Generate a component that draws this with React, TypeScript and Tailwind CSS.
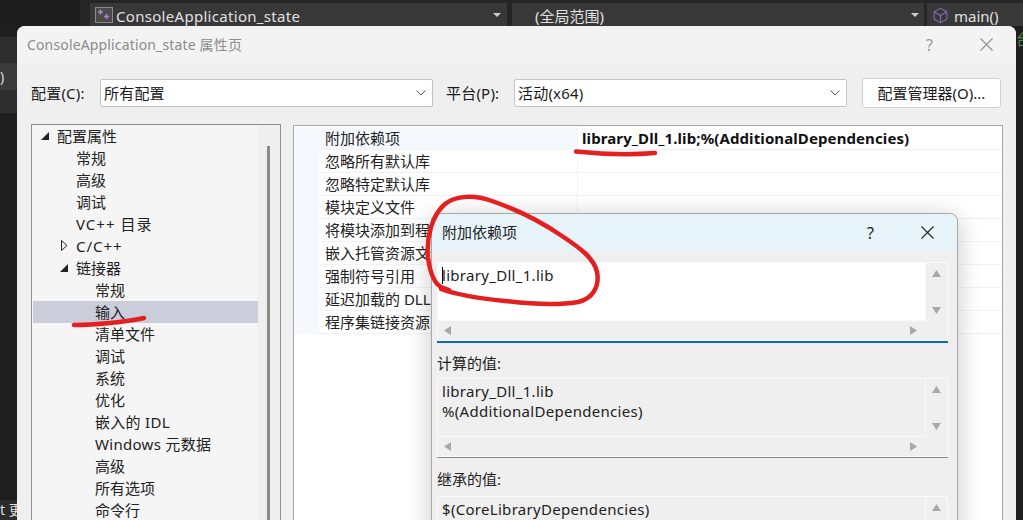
import { Box } from 'lucide-react';

const font = { fontFamily: '"Noto Sans", "Noto Sans CJK SC", sans-serif' };

const treeItems = [
  { label: '配置属性', level: 0, arrow: 'open' },
  { label: '常规', level: 1 },
  { label: '高级', level: 1 },
  { label: '调试', level: 1 },
  { label: 'VC++ 目录', level: 1, track: 'tracking-[1px]' },
  { label: 'C/C++', level: 1, arrow: 'closed', track: 'tracking-[1px]' },
  { label: '链接器', level: 1, arrow: 'open' },
  { label: '常规', level: 2 },
  { label: '输入', level: 2, selected: true },
  { label: '清单文件', level: 2 },
  { label: '调试', level: 2 },
  { label: '系统', level: 2 },
  { label: '优化', level: 2 },
  { label: '嵌入的 IDL', level: 2, track: 'tracking-[0.3px]' },
  { label: 'Windows 元数据', level: 2, track: 'tracking-[0.3px]' },
  { label: '高级', level: 2 },
  { label: '所有选项', level: 2 },
  { label: '命令行', level: 2 },
];

const gridRows = [
  '附加依赖项',
  '忽略所有默认库',
  '忽略特定默认库',
  '模块定义文件',
  '将模块添加到程序集',
  '嵌入托管资源文件',
  '强制符号引用',
  '延迟加载的 DLL',
  '程序集链接资源',
];

function Chevron() {
  return (
    <svg width="12" height="8" viewBox="0 0 12 8" fill="none" stroke="#555" strokeWidth="1">
      <path d="M1.5 1.5 L6 6 L10.5 1.5" />
    </svg>
  );
}

function Combo({ text }: { text: string }) {
  return (
    <div className="w-[333px] h-[28px] flex items-center justify-between pl-[3px] pr-[5px] bg-white border border-[#c4c4c4] rounded-[2px] text-[15px] tracking-[0.2px] text-[#1a1a1a]">
      <span>{text}</span>
      <Chevron />
    </div>
  );
}

function CloseIcon({ color, size = 13 }: { color: string; size?: number }) {
  return (
    <svg width={size} height={size} viewBox="0 0 13 13" fill="none" stroke={color} strokeWidth="1.1">
      <path d="M0.5 0.5 L12.5 12.5 M12.5 0.5 L0.5 12.5" />
    </svg>
  );
}

function ScrollArrow({ dir }: { dir: 'up' | 'down' | 'left' | 'right' }) {
  const points = {
    up: '0,7 4.5,0 9,7',
    down: '0,0 9,0 4.5,7',
    left: '7,0 7,9 0,4.5',
    right: '0,0 7,4.5 0,9',
  }[dir];
  return (
    <svg width="9" height="9" viewBox="0 0 9 9">
      <polygon points={points} fill="#a8a8a8" />
    </svg>
  );
}

function TextBox({ lines, white }: { lines: string[]; white?: boolean }) {
  return (
    <div className="h-[79px] flex flex-col border border-[#fafafa] bg-[#efefef]">
      <div className="flex flex-1 min-h-0">
        <div className={`flex-1 px-[4px] pt-[2px] border-r border-b border-[#fafafa] ${white ? 'bg-white' : ''}`}>
          {lines.map((line, i) => (
            <div key={i} className="h-[20px] leading-[20px] text-[15px] tracking-[0.3px] text-[#222]">
              {i === 0 && white && <span className="inline-block w-px h-[17px] bg-black align-[-3px] -mr-px" />}
              {line}
            </div>
          ))}
        </div>
        <div className="w-[21px] shrink-0 flex flex-col items-center justify-between pt-[7px] pb-[5px]">
          <ScrollArrow dir="up" />
          <ScrollArrow dir="down" />
        </div>
      </div>
      <div className="h-[19px] shrink-0 flex items-center justify-between pl-[6px] pr-[28px]">
        <ScrollArrow dir="left" />
        <ScrollArrow dir="right" />
      </div>
    </div>
  );
}

function IdeBackground() {
  return (
    <div className="h-full flex flex-col">
      <div className="flex h-[26px] shrink-0">
        <div className="w-[80px] bg-[#1c1c1c]" />
        <div className="w-[10px] bg-[#262626]" />
        <div className="flex-1 flex pt-[3px] bg-[#252525] text-[#e0e0e0] text-[15px]">
          <div className="w-[417px] bg-[#383838] flex items-center pl-[5px] pr-[6px]">
            <svg width="18" height="17" viewBox="0 0 18 17" className="mr-[3px] mt-[2px]">
              <rect x="0.5" y="0.5" width="17" height="15" fill="#4a4a4a" stroke="#8a8a8a" />
              <path d="M3 5h5M5.500 2.500v5M9 9.500h5M11.500 7v5" stroke="#b180d7" strokeWidth="1.5" />
            </svg>
            <span className="flex-1 pt-[3px] tracking-[0.3px]">ConsoleApplication_state</span>
            <span className="border-x-[4px] border-x-transparent border-t-[4px] border-t-[#ccc]" />
          </div>
          <div className="w-[412px] ml-[5px] bg-[#383838] flex items-center justify-between pl-[23px] pr-[5px]">
            <span className="pt-[3px]">(全局范围)</span>
            <span className="border-x-[4px] border-x-transparent border-t-[4px] border-t-[#ccc]" />
          </div>
          <div className="flex-1 ml-[3px] bg-[#383838] flex items-center pl-[5px] gap-[5px]">
            <Box size={17} color="#8a6bb5" strokeWidth={1.5} className="mt-[2px]" />
            <span className="pt-[3px]">main()</span>
          </div>
        </div>
      </div>
      <div className="flex-1 flex justify-between bg-[#1e1e1e]">
        <div className="w-[17px] flex flex-col text-[#ddd] text-[14px]">
          <div className="h-[11px]" />
          <div className="h-[26px] bg-[#2e2e2e]" />
          <div className="h-[27px] bg-[#3a3a3a] leading-[27px]">)</div>
          <div className="h-[23px] bg-[#2e2e2e]" />
          <div className="flex-1" />
          <div className="h-[20px] leading-[20px] bg-[#2c2c2c] whitespace-nowrap overflow-hidden">t 更</div>
        </div>
        <div className="w-[7px] pt-[2px] text-[#4e8a3e] text-[15px] overflow-hidden whitespace-nowrap">台</div>
      </div>
    </div>
  );
}

function InnerDialog() {
  return (
    <div className="absolute left-[431px] top-[213px] w-[527px] h-[330px] flex flex-col bg-[#efefef] border border-[#a8a8a8] rounded-t-[8px] shadow-[0_4px_24px_rgba(0,0,0,0.22)]">
      <div className="h-[37px] shrink-0 flex items-center bg-[#e6f3f8] rounded-t-[8px] pl-[10px] text-[15px] text-[#222]">
        <span className="flex-1">附加依赖项</span>
        <span className="w-[20px] pl-[4px] text-[16px] text-[#222]">?</span>
        <span className="ml-[38px] mr-[23px] flex"><CloseIcon color="#222" /></span>
      </div>
      <div className="flex-1 flex flex-col px-[5px] pt-[11px]">
        <div className="mr-[4px] border-b-2 border-[#0a68c4]">
          <TextBox lines={['library_Dll_1.lib']} white />
        </div>
        <div className="h-[22px] leading-[22px] mt-[9px] text-[15px] text-[#222]">计算的值:</div>
        <div className="mt-[4px] mr-[4px] border-b border-[#8a8a8a]">
          <TextBox lines={['library_Dll_1.lib', '%(AdditionalDependencies)']} />
        </div>
        <div className="h-[22px] leading-[22px] mt-[10px] text-[15px] text-[#222]">继承的值:</div>
        <div className="mt-[6px] mr-[4px]">
          <TextBox lines={['$(CoreLibraryDependencies)']} />
        </div>
      </div>
    </div>
  );
}

function OuterDialog() {
  return (
    <div className="absolute left-[17px] top-[26px] w-[999px] h-[520px] flex flex-col bg-[#efefef] rounded-t-[8px]">
      <div className="h-[37px] shrink-0 flex items-center bg-[#f3f3f3] rounded-t-[8px] pl-[10px] text-[14px] text-[#8c8c8c]">
        <span className="flex-1 tracking-[0.15px]">ConsoleApplication_state 属性页</span>
        <span className="w-[20px] pl-[4px] text-[16px] text-[#999]">?</span>
        <span className="ml-[38px] mr-[23px] flex"><CloseIcon color="#8f8f8f" /></span>
      </div>
      <div className="flex items-center pl-[14px] pr-[15px] pt-[15px] text-[15px] text-[#1a1a1a]">
        <span className="w-[69px] tracking-[0.2px]">配置(C):</span>
        <Combo text="所有配置" />
        <span className="w-[68px] ml-[13px] tracking-[0.2px]">平台(P):</span>
        <Combo text="活动(x64)" />
        <div className="ml-[15px] w-[139px] h-[30px] flex items-center justify-center bg-white border border-[#d0d0d0] rounded-[3px]">
          配置管理器(O)...
        </div>
      </div>
      <div className="flex flex-1 pl-[14px] pr-[13px] pt-[16px] gap-[12px]">
        <div className="w-[250px] border border-[#8e8e94] flex bg-[#f5f5f5] text-[15px] text-[#222]">
          <div className="flex-1 pl-px">
            {treeItems.map((item, i) => (
              <div
                key={i}
                className={`h-[22px] leading-[22px] flex items-center ${item.selected ? 'bg-[#cbcdda]' : ''}`}
              >
                <span className={item.level === 0 ? 'w-[24px]' : item.level === 1 ? 'w-[43px]' : 'w-[62px]'} />
                <span className={`relative ${item.track ?? ''}`}>
                  {item.arrow === 'open' && (
                    <svg width="8" height="8" viewBox="0 0 8 8" className="absolute -left-[16px] top-[7px]">
                      <polygon points="8,0 8,8 0,8" fill="#222" />
                    </svg>
                  )}
                  {item.arrow === 'closed' && (
                    <svg width="7" height="11" viewBox="0 0 7 11" className="absolute -left-[15px] top-[5px]">
                      <polygon points="0.5,0.5 6,5.5 0.5,10.5" fill="none" stroke="#222" />
                    </svg>
                  )}
                  {item.label}
                </span>
              </div>
            ))}
          </div>
          <div className="w-[22px] shrink-0 bg-[#efefef] pl-[9px] pt-[21px]">
            <div className="w-[3px] h-full bg-[#8a8a8a]" />
          </div>
        </div>
        <div className="flex-1 mt-px border-t border-l border-r border-[#a8a8a8] bg-white text-[15px] text-[#222]">
          <div className="pt-[1px]">
            {gridRows.map((name, i) => (
              <div key={i} className="flex h-[23px] leading-[22px]">
                <div className="w-[25px] shrink-0 bg-[#f5f8fd]" />
                <div className={`w-[258px] shrink-0 pl-[6px] border-b border-[#f0f2f8] ${i === 0 ? 'bg-[#f5f8fd]' : ''}`}>{name}</div>
                <div className="flex-1 pl-[4px] border-l border-b border-[#f0f2f8] font-bold tracking-[0.1px] text-[#111] whitespace-nowrap">
                  {i === 0 ? 'library_Dll_1.lib;%(AdditionalDependencies)' : ''}
                </div>
              </div>
            ))}
          </div>
        </div>
      </div>
    </div>
  );
}

export default function App() {
  return (
    <div className="relative w-[1023px] h-[520px] overflow-hidden" style={font}>
      <IdeBackground />
      <OuterDialog />
      <InnerDialog />
      {/* red pen annotations on top of the screenshot */}
      <svg width="1023" height="520" viewBox="0 0 1023 520" fill="none" stroke="#e3201f" strokeWidth="4.500" strokeLinecap="round" strokeLinejoin="round" className="absolute left-0 top-0 pointer-events-none">
        <path d="M576 151.500 C600 154 630 155 655 153" />
        <path d="M74 325 C95 325 125 322 144 318" />
        <path d="M449 290 L441 287 C434 283 430 272 428 258 C426 238 432 215 445 204 C456 195 475 195 492 201 C515 209 540 221 562 236 C580 248 594 258 597 272 C600 287 592 299 578 302 C560 305 530 304 505 301 C485 299 460 296 441 289" />
      </svg>
    </div>
  );
}
